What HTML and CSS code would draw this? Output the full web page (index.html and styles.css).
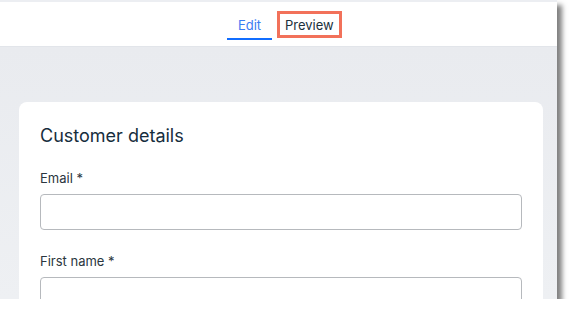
FILE: index.html
```html
<!DOCTYPE html>
<html lang="en">
<head>
  <meta charset="UTF-8">
  <title>Customer details</title>
  <link rel="stylesheet" href="styles.css">
</head>
<body>
  <div class="frame">
    <div class="topbar">
      <div class="tab tab-active">Edit</div>
      <div class="tab tab-marked">Preview</div>
    </div>

    <div class="canvas">
      <div class="card">
        <h2 class="card-title">Customer details</h2>

        <label class="field-label">Email *</label>
        <div class="field-input"></div>

        <label class="field-label">First name *</label>
        <div class="field-input"></div>
      </div>
    </div>
  </div>
</body>
</html>
```

FILE: styles.css
```css
body {
  margin: 0;
  background: #fff;
  font-family: Inter, "Noto Sans", Arial, sans-serif;
}

.frame {
  width: 557px;
  height: 299px;
  overflow: hidden;
  background: #eceef2;
  box-shadow: 5px 5px 5px rgba(0, 0, 0, 0.5);
  display: flex;
  flex-direction: column;
}

.topbar {
  flex-shrink: 0;
  margin-top: 2px;
  height: 44px;
  background: #fff;
  border-bottom: 1px solid #e2e5ea;
  display: flex;
  align-items: flex-start;
  padding-left: 227px;
  gap: 5px;
}

.tab {
  font-size: 13px;
  color: #20303c;
  line-height: 16px;
}

.tab-active {
  width: 45px;
  text-align: center;
  color: #3b7cf2;
  padding-top: 15px;
  height: 21px;
  border-bottom: 2px solid #116dff;
}

.tab-marked {
  margin-top: 9px;
  border: 3px solid #f2715a;
  padding: 3px 5px 2px 5px;
}

.canvas {
  flex: 1;
  min-height: 0;
  padding: 55px 14px 0 19px;
  background: linear-gradient(#e9ebef, #eef0f3);
}

.card {
  background: #fff;
  border-radius: 8px 8px 0 0;
  padding: 22px 21px 0 21px;
  height: 100%;
  box-sizing: border-box;
}

.card-title {
  margin: 0 0 22px 0;
  font-size: 18px;
  font-weight: 400;
  line-height: 24px;
  color: #162d3d;
}

.field-label {
  display: block;
  font-size: 13px;
  line-height: 16px;
  color: #2b3640;
  margin-bottom: 8px;
}

.field-input {
  height: 34px;
  border: 1px solid #b6b9bd;
  border-radius: 4px;
  margin-bottom: 23px;
}
```
